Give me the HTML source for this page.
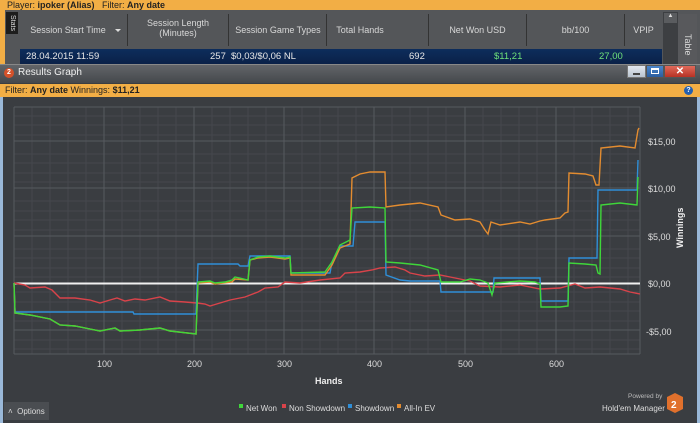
<!DOCTYPE html>
<html><head><meta charset="utf-8"><style>
*{margin:0;padding:0;box-sizing:border-box}
body{width:700px;height:423px;overflow:hidden;background:#3a3d41;font-family:"Liberation Sans",sans-serif;position:relative}
.abs{position:absolute}
.ob{background:#f2ae45;color:#222;font-size:9px}
.hd{color:#d8d8d8;font-size:9px;text-align:center}
.sep{position:absolute;top:14px;width:1px;height:32px;background:#333}
</style></head><body>
<div class="abs ob" style="left:0;top:0;width:700px;height:10px;line-height:10px;padding-left:7px">Player: <b>ipoker (Alias)</b>&nbsp;&nbsp; Filter: <b>Any date</b></div>
<div class="abs" style="left:0;top:10px;width:700px;height:54px;background:#545659"></div>
<div class="abs" style="left:0;top:10px;width:5px;height:54px;background:#f2ae45"></div>
<div class="abs" style="left:6px;top:12px;width:12px;height:22px;background:#1d1d1d;color:#ddd;font-size:7px;writing-mode:vertical-rl;text-align:center;line-height:12px">Stats</div>
<div class="abs hd" style="left:28px;top:25px;width:80px">Session Start Time</div>
<div class="abs" style="left:115px;top:29px;width:0;height:0;border-left:3px solid transparent;border-right:3px solid transparent;border-top:3px solid #ddd"></div>
<div class="sep" style="left:127px"></div>
<div class="abs hd" style="left:128px;top:18px;width:100px">Session Length<br>(Minutes)</div>
<div class="sep" style="left:228px"></div>
<div class="abs hd" style="left:229px;top:25px;width:98px">Session Game Types</div>
<div class="sep" style="left:326px"></div>
<div class="abs hd" style="left:310px;top:25px;width:100px">Total Hands</div>
<div class="sep" style="left:428px"></div>
<div class="abs hd" style="left:429px;top:25px;width:97px">Net Won USD</div>
<div class="sep" style="left:526px"></div>
<div class="abs hd" style="left:527px;top:25px;width:97px">bb/100</div>
<div class="sep" style="left:624px"></div>
<div class="abs hd" style="left:625px;top:25px;width:37px">VPIP</div>
<div class="abs" style="left:663px;top:12px;width:15px;height:52px;background:#3d3f42"></div>
<div class="abs" style="left:664px;top:13px;width:13px;height:10px;background:#5a5c5f;color:#ddd;font-size:6px;text-align:center">▲</div>
<div class="abs" style="left:678px;top:14px;width:19px;height:50px;background:#58595c;color:#ddd;font-size:9px;writing-mode:vertical-rl;text-align:center;line-height:19px;padding-top:12px">Table</div>
<div class="abs" style="left:20px;top:49px;width:642px;height:15px;background:linear-gradient(#0d2d5c,#0a2148);color:#e6e6e6;font-size:9.5px;line-height:15px">
<span class="abs" style="left:6px">28.04.2015 11:59</span><span class="abs" style="left:190px">257</span><span class="abs" style="left:211px">$0,03/$0,06 NL</span><span class="abs" style="left:389px">692</span><span class="abs" style="left:474px;color:#6fe27a">$11,21</span><span class="abs" style="left:579px;color:#6fe27a">27,00</span></div>
<div class="abs" style="left:0;top:64px;width:700px;height:19px;background:linear-gradient(#626569,#45484c);border-top:1px solid #888"></div>
<div class="abs" style="left:4px;top:68px;width:10px;height:10px;border-radius:50%;background:#d4512a;color:#fff;font-size:7px;font-weight:bold;text-align:center;line-height:10px">2</div>
<div class="abs" style="left:18px;top:67px;color:#eee;font-size:10px">Results Graph</div>
<div class="abs" style="left:627px;top:65px;width:19px;height:13px;background:linear-gradient(#e3e8ef,#b9c3cf);border:1px solid #777"><div class="abs" style="left:5px;top:7px;width:7px;height:2px;background:#444"></div></div>
<div class="abs" style="left:646px;top:65px;width:18px;height:13px;background:linear-gradient(#4a86cc,#2a5d9f);border:1px solid #555"><div class="abs" style="left:4px;top:2px;width:8px;height:6px;border:1px solid #fff;border-top-width:2px"></div></div>
<div class="abs" style="left:664px;top:65px;width:32px;height:13px;background:linear-gradient(#e06a5a,#b73225);border:1px solid #555;color:#fff;font-size:10px;font-weight:bold;text-align:center;line-height:11px">✕</div>
<div class="abs ob" style="left:0;top:84px;width:700px;height:13px;line-height:13px;padding-left:5px">Filter: <b>Any date</b> Winnings: <b>$11,21</b></div>
<div class="abs" style="left:684px;top:86px;width:9px;height:9px;border-radius:50%;background:#2460b0;color:#fff;font-size:7px;text-align:center;line-height:9px;font-weight:bold">?</div>
<div class="abs" style="left:0;top:97px;width:3px;height:326px;background:#9ab8d8"></div>
<div class="abs" style="left:697px;top:97px;width:3px;height:326px;background:#9ab8d8"></div>
<svg class="abs" style="left:0;top:97px" width="700" height="326" viewBox="0 97 700 326">
<g stroke="#45484d" stroke-width="1">
<path d="M14 116H640M14 125H640M14 135H640M14 154H640M14 163H640M14 173H640M14 182H640M14 201H640M14 211H640M14 220H640M14 230H640M14 249H640M14 258H640M14 268H640M14 277H640M14 292H640M14 302H640M14 311H640M14 321H640M14 340H640M14 349H640"/>
<path d="M32 107V354M50 107V354M68 107V354M86 107V354M122 107V354M140 107V354M158 107V354M176 107V354M212 107V354M230 107V354M248 107V354M266 107V354M302 107V354M320 107V354M338 107V354M356 107V354M392 107V354M410 107V354M428 107V354M446 107V354M483 107V354M501 107V354M519 107V354M537 107V354M574 107V354M592 107V354M610 107V354M628 107V354"/>
</g>
<g stroke="#575a5f" stroke-width="1">
<path d="M14 107H640M14 141H640M14 188H640M14 236H640M14 330H640M14 354H640M14 107V354M640 107V354"/>
<path d="M104 107V354M194 107V354M284 107V354M374 107V354M465 107V354M556 107V354"/>
</g>
<path d="M14 283.5H640" stroke="#f0f0f0" stroke-width="2"/>
<g fill="none" stroke-width="1.4">
<polyline stroke="#d9434a" points="14,283 25,285 30,288 45,287 52,290 60,298 75,298 90,300 100,303 110,300 117,298 125,301 135,299 145,300 160,297 170,301 185,302 197,303 205,304 210,306 220,303 230,300 245,297 258,292 265,288 278,287 285,282 300,283 320,280 340,278 345,273 360,272 372,270 380,268 395,267 405,270 410,273 425,276 440,275 455,278 470,281 480,286 500,287 520,285 540,289 560,288 575,284 585,288 600,287 620,289 630,292 640,294"/>
<polyline stroke="#2f8fd8" points="14,283 15,312 60,312 133,312 134,314 196,314 198,264 238,264 240,266 248,266 250,256 290,256 291,273 330,273 332,262 340,246 353,246 355,222 385,222 386,275 400,280 410,281 440,281 441,292 493,292 494,278 540,278 541,301 568,301 569,258 597,258 598,190 637,190 638,160"/>
<polyline stroke="#e38c30" points="14,283 15,313 30,315 50,319 60,325 75,326 90,329 100,331 115,328 120,331 140,330 160,328 170,331 196,334 198,283 210,282 215,284 232,282 235,279 248,280 250,260 258,258 270,257 285,259 290,258 291,275 325,275 332,265 340,248 350,244 352,178 360,174 370,172 385,172 386,207 400,205 420,203 438,207 441,215 455,220 470,219 480,222 485,230 488,234 491,222 500,225 520,222 530,224 540,221 545,220 560,218 565,213 568,212 569,173 585,174 593,176 596,185 599,185 601,148 620,146 635,148 638,130 639,128"/>
<polyline stroke="#3fd63a" points="14,283 15,313 30,315 50,319 60,325 75,326 90,329 100,331 115,328 120,331 140,330 160,328 170,331 196,334 198,282 210,281 215,283 225,282 232,280 235,277 248,280 250,260 258,257 270,256 285,258 290,257 291,273 325,272 332,262 340,245 350,240 352,208 370,207 385,208 386,262 400,263 420,265 438,270 441,282 460,282 470,279 480,280 488,283 492,295 495,283 520,281 535,282 540,284 541,307 560,307 568,306 569,263 585,264 596,265 598,273 600,274 601,205 620,203 637,205 638,177"/>
</g>
<g fill="#dcdcdc" font-size="9" font-family="Liberation Sans,sans-serif">
<text x="648" y="145">$15,00</text><text x="648" y="192">$10,00</text><text x="648" y="240">$5,00</text><text x="648" y="287">$0,00</text><text x="646" y="335">-$5,00</text>
<text x="97" y="367">100</text><text x="187" y="367">200</text><text x="277" y="367">300</text><text x="367" y="367">400</text><text x="458" y="367">500</text><text x="549" y="367">600</text>
<text x="315" y="384" font-weight="bold" fill="#eee">Hands</text>
<text x="0" y="0" font-weight="bold" fill="#eee" transform="translate(683,248) rotate(-90)">Winnings</text>
</g>
<rect x="4" y="402" width="45" height="18" fill="#4a4d51"/>
<text x="8" y="414" font-size="8" fill="#ddd" font-family="Liberation Sans,sans-serif">˄ &#160;Options</text>
<g font-size="8" fill="#ddd" font-family="Liberation Sans,sans-serif">
<rect x="239" y="404" width="4" height="4" fill="#3fd63a"/><text x="246" y="411">Net Won</text>
<rect x="282" y="404" width="4" height="4" fill="#d9434a"/><text x="289" y="411">Non Showdown</text>
<rect x="348" y="404" width="4" height="4" fill="#2f8fd8"/><text x="355" y="411">Showdown</text>
<rect x="397" y="404" width="4" height="4" fill="#e38c30"/><text x="404" y="411">All-In EV</text>
<text x="628" y="398" font-size="6.5" fill="#bbb">Powered by</text>
<text x="602" y="411">Hold'em Manager</text>
</g>
<polygon points="675,393 683,397 683,409 675,413 667,409 667,397" fill="#e0702c"/>
<text x="671" y="408" font-size="10" font-weight="bold" fill="#fff" font-family="Liberation Sans,sans-serif">2</text>
</svg>
</body></html>
